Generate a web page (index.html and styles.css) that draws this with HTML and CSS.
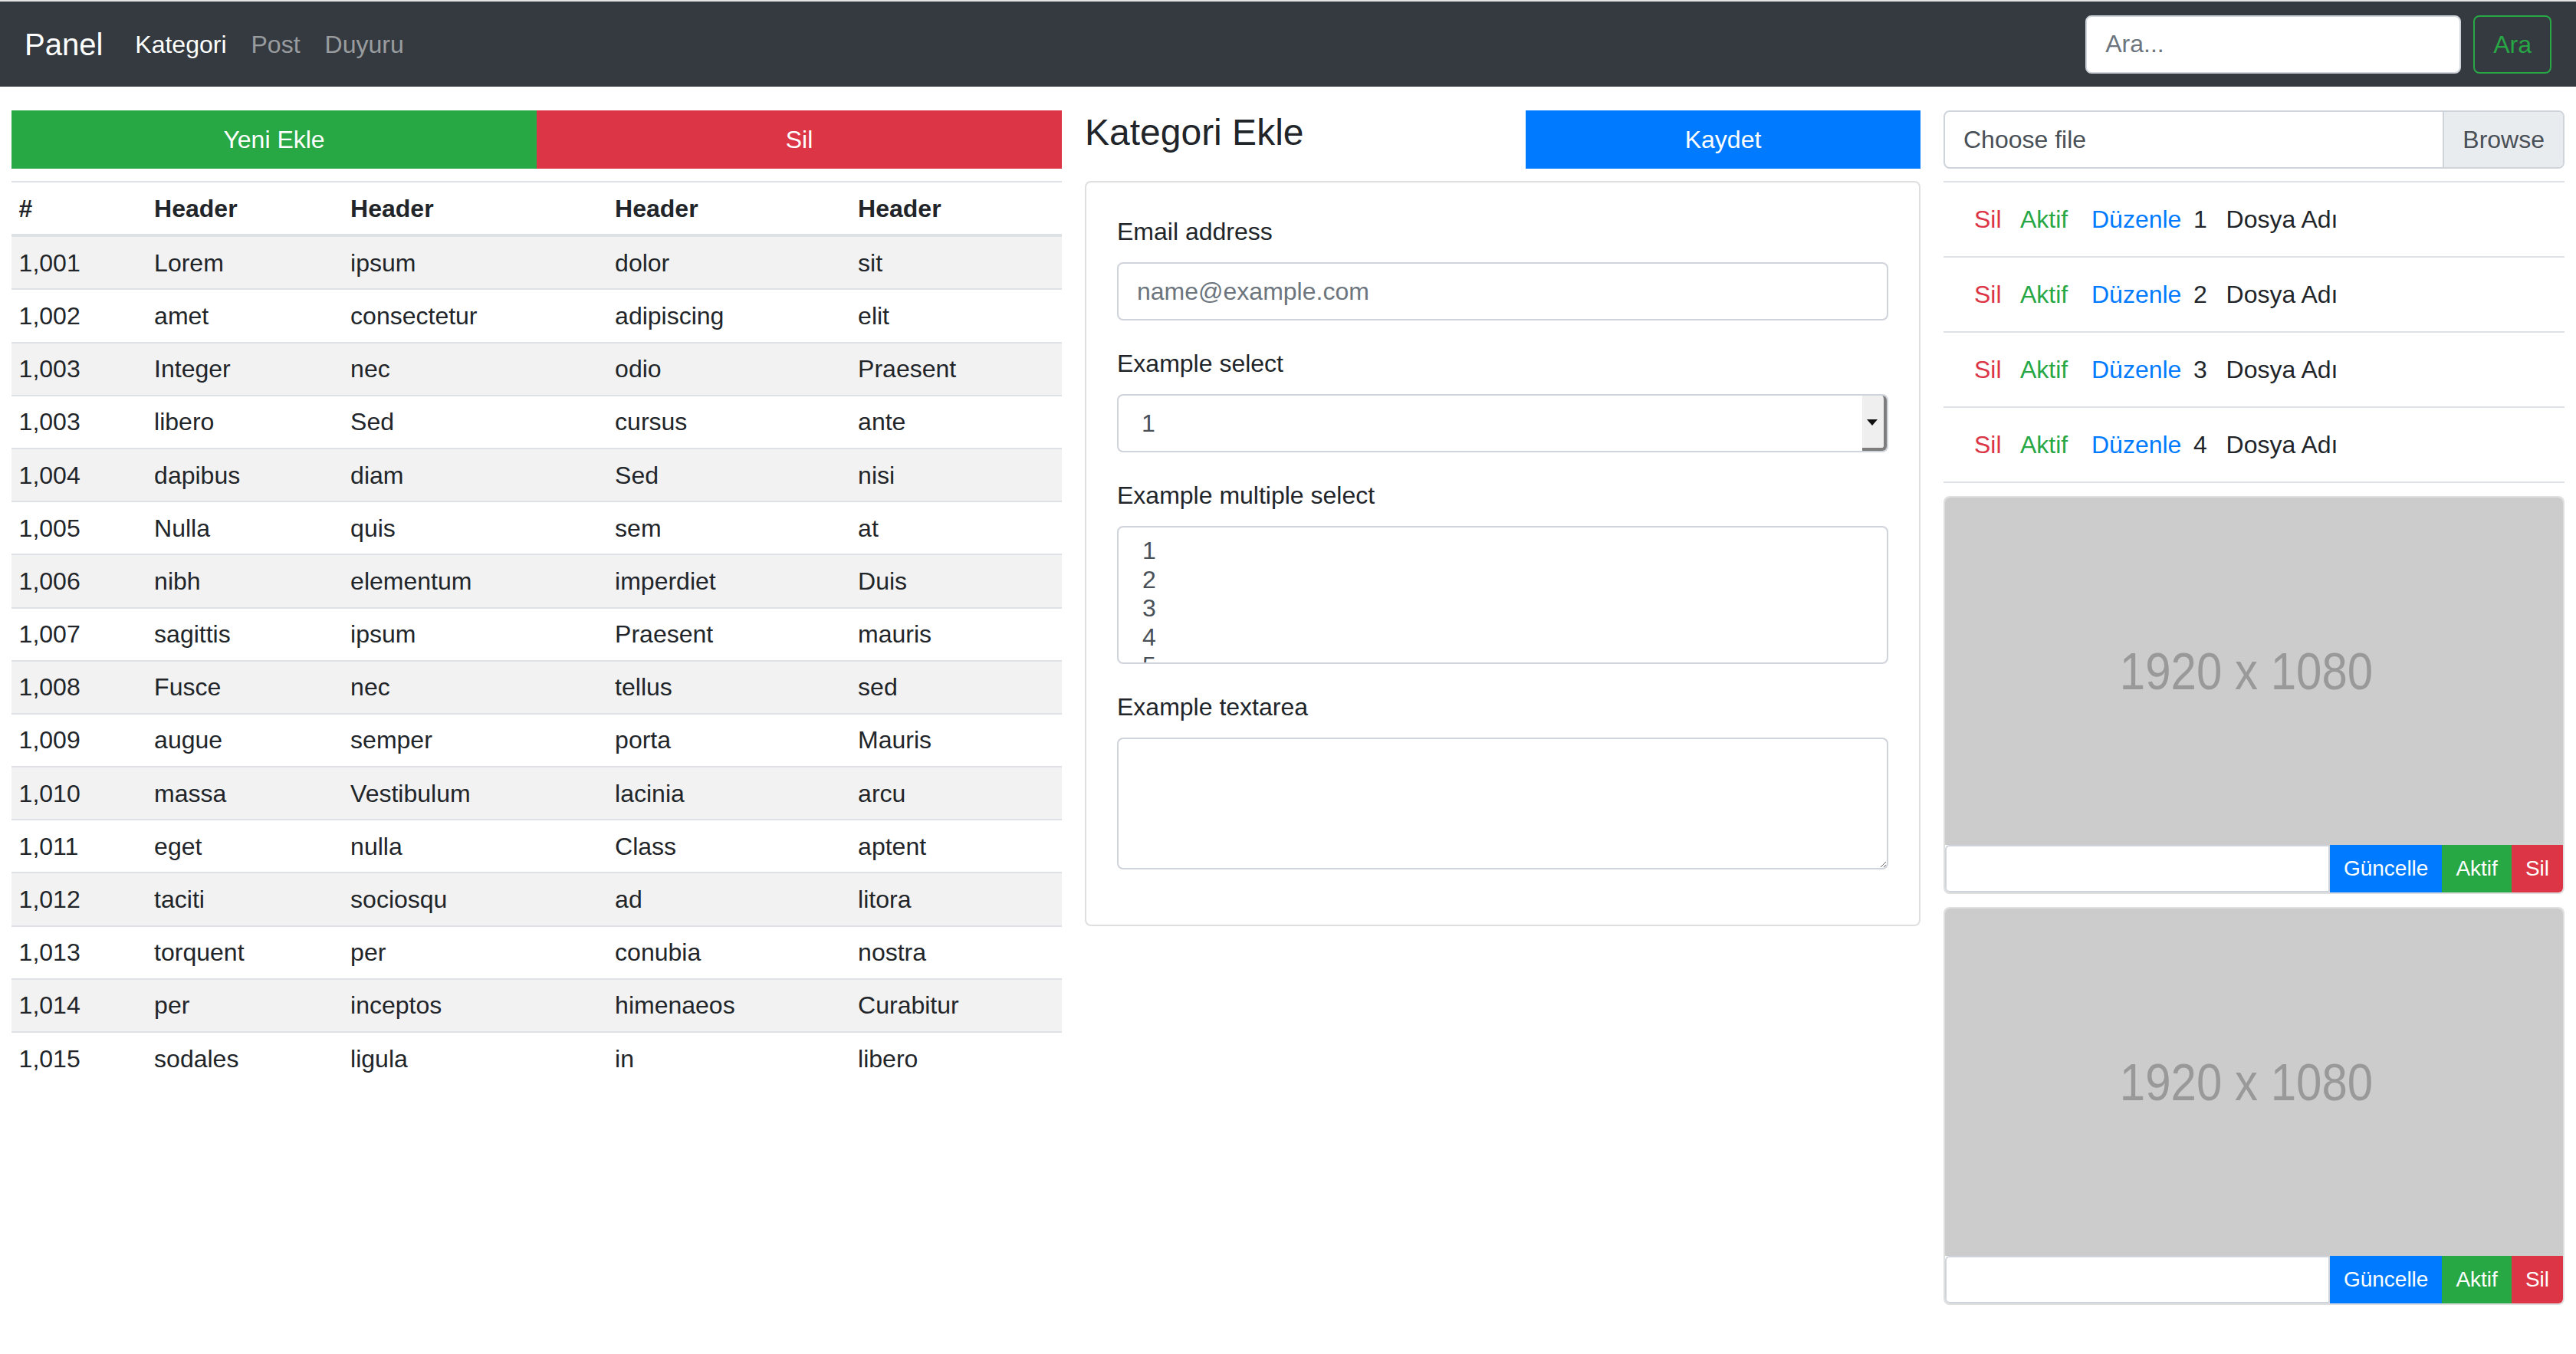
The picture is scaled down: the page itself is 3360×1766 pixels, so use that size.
FILE: index.html
```html
<!DOCTYPE html>
<html lang="tr">
<head>
<meta charset="utf-8">
<title>Panel</title>
<link rel="stylesheet" href="styles.css">
</head>
<body>
<div class="topstrip"></div>
<nav class="navbar">
  <a class="brand" href="#">Panel</a>
  <ul class="nav">
    <li><a class="nav-link active" href="#">Kategori</a></li>
    <li><a class="nav-link" href="#">Post</a></li>
    <li><a class="nav-link" href="#">Duyuru</a></li>
  </ul>
  <form class="search">
    <input class="search-input" type="search" placeholder="Ara...">
    <button class="btn-outline" type="button">Ara</button>
  </form>
</nav>

<main class="main">
  <section class="col">
    <div class="btn-group">
      <button class="btn btn-success" type="button">Yeni Ekle</button>
      <button class="btn btn-danger" type="button">Sil</button>
    </div>
    <table class="data-table">
      <colgroup>
        <col class="c1"><col class="c2"><col class="c3"><col class="c4"><col class="c5">
      </colgroup>
      <thead>
        <tr><th>#</th><th>Header</th><th>Header</th><th>Header</th><th>Header</th></tr>
      </thead>
      <tbody>
        <tr><td>1,001</td><td>Lorem</td><td>ipsum</td><td>dolor</td><td>sit</td></tr>
        <tr><td>1,002</td><td>amet</td><td>consectetur</td><td>adipiscing</td><td>elit</td></tr>
        <tr><td>1,003</td><td>Integer</td><td>nec</td><td>odio</td><td>Praesent</td></tr>
        <tr><td>1,003</td><td>libero</td><td>Sed</td><td>cursus</td><td>ante</td></tr>
        <tr><td>1,004</td><td>dapibus</td><td>diam</td><td>Sed</td><td>nisi</td></tr>
        <tr><td>1,005</td><td>Nulla</td><td>quis</td><td>sem</td><td>at</td></tr>
        <tr><td>1,006</td><td>nibh</td><td>elementum</td><td>imperdiet</td><td>Duis</td></tr>
        <tr><td>1,007</td><td>sagittis</td><td>ipsum</td><td>Praesent</td><td>mauris</td></tr>
        <tr><td>1,008</td><td>Fusce</td><td>nec</td><td>tellus</td><td>sed</td></tr>
        <tr><td>1,009</td><td>augue</td><td>semper</td><td>porta</td><td>Mauris</td></tr>
        <tr><td>1,010</td><td>massa</td><td>Vestibulum</td><td>lacinia</td><td>arcu</td></tr>
        <tr><td>1,011</td><td>eget</td><td>nulla</td><td>Class</td><td>aptent</td></tr>
        <tr><td>1,012</td><td>taciti</td><td>sociosqu</td><td>ad</td><td>litora</td></tr>
        <tr><td>1,013</td><td>torquent</td><td>per</td><td>conubia</td><td>nostra</td></tr>
        <tr><td>1,014</td><td>per</td><td>inceptos</td><td>himenaeos</td><td>Curabitur</td></tr>
        <tr><td>1,015</td><td>sodales</td><td>ligula</td><td>in</td><td>libero</td></tr>
      </tbody>
    </table>
  </section>

  <section class="col">
    <div class="head-row">
      <h4 class="title">Kategori Ekle</h4>
      <button class="btn btn-primary btn-block" type="button">Kaydet</button>
    </div>
    <div class="card form-card">
      <div class="card-body">
        <div class="form-group">
          <label class="label">Email address</label>
          <input class="form-control" type="email" placeholder="name@example.com">
        </div>
        <div class="form-group">
          <label class="label">Example select</label>
          <div class="form-control select-box">1<span class="select-btn"></span></div>
        </div>
        <div class="form-group">
          <label class="label">Example multiple select</label>
          <div class="form-control multi-select">
            <div class="opt">1</div>
            <div class="opt">2</div>
            <div class="opt">3</div>
            <div class="opt">4</div>
            <div class="opt">5</div>
          </div>
        </div>
        <div class="form-group">
          <label class="label">Example textarea</label>
          <textarea class="form-control textarea"></textarea>
        </div>
      </div>
    </div>
  </section>

  <section class="col">
    <div class="custom-file">
      <span class="custom-file-label">Choose file</span>
      <span class="custom-file-btn">Browse</span>
    </div>
    <div class="file-list">
      <div class="file-row"><a class="fl-sil" href="#">Sil</a><a class="fl-aktif" href="#">Aktif</a><a class="fl-duz" href="#">Düzenle</a><span class="fl-num">1</span><span class="fl-name">Dosya Adı</span></div>
      <div class="file-row"><a class="fl-sil" href="#">Sil</a><a class="fl-aktif" href="#">Aktif</a><a class="fl-duz" href="#">Düzenle</a><span class="fl-num">2</span><span class="fl-name">Dosya Adı</span></div>
      <div class="file-row"><a class="fl-sil" href="#">Sil</a><a class="fl-aktif" href="#">Aktif</a><a class="fl-duz" href="#">Düzenle</a><span class="fl-num">3</span><span class="fl-name">Dosya Adı</span></div>
      <div class="file-row"><a class="fl-sil" href="#">Sil</a><a class="fl-aktif" href="#">Aktif</a><a class="fl-duz" href="#">Düzenle</a><span class="fl-num">4</span><span class="fl-name">Dosya Adı</span></div>
    </div>

    <div class="card img-card">
      <div class="placeholder-img"><span class="ph-text">1920 x 1080</span></div>
      <div class="input-group">
        <input class="ig-input" type="text">
        <button class="btn-sm btn-primary" type="button">Güncelle</button>
        <button class="btn-sm btn-success" type="button">Aktif</button>
        <button class="btn-sm btn-danger" type="button">Sil</button>
      </div>
    </div>
    <div class="card img-card">
      <div class="placeholder-img"><span class="ph-text">1920 x 1080</span></div>
      <div class="input-group">
        <input class="ig-input" type="text">
        <button class="btn-sm btn-primary" type="button">Güncelle</button>
        <button class="btn-sm btn-success" type="button">Aktif</button>
        <button class="btn-sm btn-danger" type="button">Sil</button>
      </div>
    </div>
  </section>
</main>
</body>
</html>
```

FILE: styles.css
```css
* { box-sizing: border-box; }

html, body {
  margin: 0;
  padding: 0;
}

body {
  font-family: "Liberation Sans", Arial, Helvetica, sans-serif;
  font-size: 32px;
  line-height: 48px;
  color: #212529;
  background: #fff;
}

.topstrip {
  height: 2px;
  background: #e4e4e4;
}

/* ---------- navbar ---------- */
.navbar {
  display: flex;
  align-items: center;
  height: 111px;
  padding: 0 32px;
  background: #343a40;
}

.brand {
  font-size: 40px;
  line-height: 60px;
  color: #fff;
  text-decoration: none;
  margin-right: 26px;
}

.nav {
  display: flex;
  list-style: none;
  margin: 0;
  padding: 0;
}

.nav-link {
  display: block;
  padding: 0 16px;
  color: rgba(255, 255, 255, .5);
  text-decoration: none;
}

.nav-link.active { color: #fff; }

.search {
  margin: 0 0 0 auto;
  display: flex;
  align-items: center;
}

.search-input {
  width: 490px;
  height: 76px;
  padding: 12px 24px;
  margin-right: 16px;
  font: inherit;
  color: #495057;
  background: #fff;
  border: 2px solid #ced4da;
  border-radius: 8px;
  outline: none;
}

.search-input::placeholder { color: #6c757d; }

.btn-outline {
  height: 76px;
  padding: 12px 24px;
  font: inherit;
  color: #28a745;
  background: transparent;
  border: 2px solid #28a745;
  border-radius: 8px;
}

/* ---------- layout ---------- */
.main {
  display: grid;
  grid-template-columns: 5fr 4fr 3fr;
  margin-top: 31px;
}

.col {
  padding: 0 15px;
  min-width: 0;
}

/* ---------- buttons ---------- */
.btn {
  display: block;
  height: 76px;
  margin: 0;
  padding: 12px 24px;
  font: inherit;
  color: #fff;
  text-align: center;
  border: 2px solid transparent;
  border-radius: 0;
}

.btn-group { display: flex; }
.btn-group .btn { flex: 1 1 0; }

.btn-success { background: #28a745; border-color: #28a745; }
.btn-danger { background: #dc3545; border-color: #dc3545; }
.btn-primary { background: #007bff; border-color: #007bff; }

.btn-block { width: 100%; }

/* ---------- data table ---------- */
.data-table {
  width: 100%;
  margin-top: 16px;
  border-collapse: separate;
  border-spacing: 0;
  table-layout: fixed;
}

.data-table .c1 { width: 176.5px; }
.data-table .c2 { width: 256px; }
.data-table .c3 { width: 345px; }
.data-table .c4 { width: 317px; }

.data-table th,
.data-table td {
  padding: 9.6px;
  text-align: left;
  vertical-align: top;
  white-space: nowrap;
}

.data-table th {
  font-weight: 700;
  border-top: 2px solid #dee2e6;
  border-bottom: 4px solid #dee2e6;
}

.data-table tbody tr + tr td { border-top: 2px solid #dee2e6; }
.data-table tbody tr:nth-child(odd) td { background: #f2f2f2; }

/* ---------- form column ---------- */
.head-row {
  display: grid;
  grid-template-columns: 1fr 1fr;
  column-gap: 60px;
  align-items: start;
}

.title {
  margin: 0;
  font-size: 48px;
  line-height: 57.6px;
  font-weight: 500;
}

.card {
  background: #fff;
  border: 2px solid rgba(0, 0, 0, .125);
  border-radius: 8px;
}

.form-card { margin-top: 16px; }

.card-body { padding: 40px; }

.form-group { margin-bottom: 32px; }

.label {
  display: block;
  margin-bottom: 16px;
}

.form-control {
  display: block;
  width: 100%;
  height: 76px;
  padding: 12px 24px;
  font: inherit;
  color: #495057;
  background: #fff;
  border: 2px solid #ced4da;
  border-radius: 8px;
  outline: none;
}

.form-control::placeholder { color: #6c757d; }

.select-box {
  position: relative;
  padding-left: 30px;
}

.select-btn {
  position: absolute;
  top: 0;
  right: 0;
  bottom: 0;
  width: 32px;
  background: #efefef;
  border-right: 4px solid #7d7d7d;
  border-bottom: 4px solid #7d7d7d;
  border-top-right-radius: 6px;
  border-bottom-right-radius: 6px;
}

.select-btn::after {
  content: "";
  position: absolute;
  left: 6px;
  top: 50%;
  margin-top: -3px;
  border-left: 7px solid transparent;
  border-right: 7px solid transparent;
  border-top: 8px solid #111;
}

.multi-select {
  height: 180px;
  overflow: hidden;
  padding: 12px 24px 12px 31px;
}

.opt { line-height: 37.6px; }

.textarea {
  height: 172px;
  resize: vertical;
}

/* ---------- right column ---------- */
.custom-file {
  display: flex;
  height: 76px;
  color: #495057;
  border: 2px solid #ced4da;
  border-radius: 8px;
  overflow: hidden;
}

.custom-file-label {
  flex: 1 1 auto;
  padding: 12px 24px;
}

.custom-file-btn {
  padding: 12px 24px;
  background: #e9ecef;
  border-left: 2px solid #ced4da;
}

.file-list {
  margin-top: 16px;
  border-bottom: 2px solid #dee2e6;
}

.file-row {
  display: flex;
  align-items: center;
  height: 98px;
  padding-left: 40px;
  border-top: 2px solid #dee2e6;
}

.file-row a { text-decoration: none; }

.fl-sil { width: 60px; color: #dc3545; }
.fl-aktif { width: 93px; color: #28a745; }
.fl-duz { width: 133px; color: #007bff; }
.fl-num { width: 42.6px; }
.fl-name { color: #212529; }

.img-card {
  margin-top: 17px;
  overflow: hidden;
}

.placeholder-img {
  display: flex;
  align-items: center;
  justify-content: center;
  height: 453px;
  padding-right: 20px;
  background: #ccc;
  color: #999;
}

.ph-text {
  font-size: 60px;
  line-height: 60px;
  display: inline-block;
  transform: scaleY(1.15);
}

.input-group {
  display: flex;
  height: 62px;
}

.ig-input {
  flex: 1 1 auto;
  min-width: 0;
  margin: 0;
  font: inherit;
  border: 2px solid #ced4da;
  border-radius: 6px 0 0 6px;
  background: #fff;
  outline: none;
}

.btn-sm {
  margin: 0;
  padding: 8px 16px;
  font-family: inherit;
  font-size: 28px;
  line-height: 42px;
  color: #fff;
  border: 2px solid transparent;
  border-radius: 0;
}
```
